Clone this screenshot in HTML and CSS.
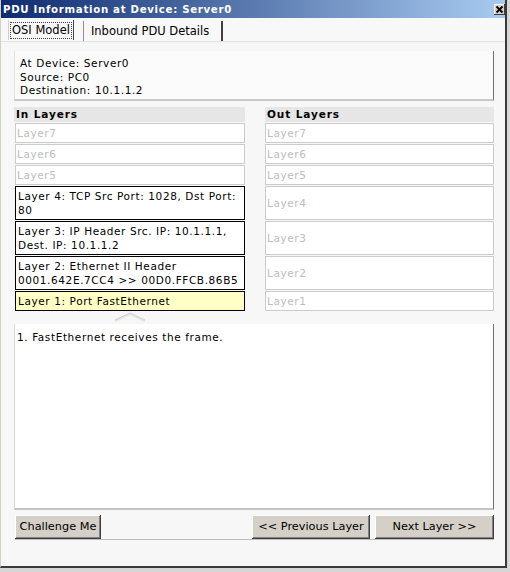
FILE: index.html
```html
<!DOCTYPE html>
<html>
<head>
<meta charset="utf-8">
<link rel="stylesheet" href="styles.css">
</head>
<body>
<div class="window">
  <div class="titlebar">
    <span class="title">PDU Information at Device: Server0</span>
    <span class="close"><svg width="9" height="9" viewBox="0 0 9 9"><path d="M1.5 1.5 L7.5 7.5 M7.5 1.5 L1.5 7.5" stroke="#000" stroke-width="1.8" fill="none"/></svg></span>
  </div>
  <div class="tabs">
    <div class="tab tab-sel"><span class="focus">OSI Model</span></div>
    <div class="tab tab-off">Inbound PDU Details</div>
  </div>
  <div class="page">
    <div class="info">At Device: Server0<br>Source: PC0<br>Destination: 10.1.1.2</div>
    <div class="cols">
      <div class="col col-in">
        <div class="colhead">In Layers</div>
        <div class="row">Layer7</div>
        <div class="row">Layer6</div>
        <div class="row">Layer5</div>
        <div class="row dbl act">Layer 4: TCP Src Port: 1028, Dst Port:<br>80</div>
        <div class="row dbl act">Layer 3: IP Header Src. IP: 10.1.1.1,<br>Dest. IP: 10.1.1.2</div>
        <div class="row dbl act">Layer 2: Ethernet II Header<br>0001.642E.7CC4 &gt;&gt; 00D0.FFCB.86B5</div>
        <div class="row act cur">Layer 1: Port FastEthernet</div>
      </div>
      <div class="col col-out">
        <div class="colhead">Out Layers</div>
        <div class="row">Layer7</div>
        <div class="row">Layer6</div>
        <div class="row">Layer5</div>
        <div class="row dbl">Layer4</div>
        <div class="row dbl">Layer3</div>
        <div class="row dbl">Layer2</div>
        <div class="row">Layer1</div>
      </div>
    </div>
    <div class="arrowrow">
      <svg width="34" height="11" viewBox="0 0 34 11"><polyline points="2,10 17,3 32,10" fill="none" stroke="#e6e6e6" stroke-width="2"/><polyline points="2,9 17,2 32,9" fill="none" stroke="#cfcfcf" stroke-width="1"/></svg>
    </div>
    <div class="desc">1. FastEthernet receives the frame.</div>
    <div class="btnbar">
      <button class="btn btn-chal">Challenge Me</button>
      <span class="spacer"></span>
      <button class="btn btn-prev">&lt;&lt; Previous Layer</button>
      <button class="btn btn-next">Next Layer &gt;&gt;</button>
    </div>
  </div>
</div>
</body>
</html>
```
FILE: styles.css
```css
html, body {
  margin: 0;
  padding: 0;
}
body {
  width: 510px;
  height: 572px;
  overflow: hidden;
  background: #d6d6d6;
  font-family: "DejaVu Sans", Verdana, sans-serif;
  font-size: 10.5px;
  letter-spacing: 0.6px;
  color: #000;
}
.window {
  width: 507px;
  height: 568px;
  box-sizing: border-box;
  background: #f7f7f7;
  border-left: 1px solid #d4d0c8;
  border-right: 2px solid #3a3a3a;
  border-bottom: 2px solid #3a3a3a;
  display: flex;
  flex-direction: column;
}
.titlebar {
  height: 18px;
  flex: none;
  display: flex;
  align-items: center;
  justify-content: space-between;
  background: linear-gradient(to right, #0e2b6f, #a8cbf1);
  color: #fff;
  font-weight: bold;
  font-size: 10.2px;
  letter-spacing: 0.7px;
  padding-left: 2px;
}
.close {
  width: 11px;
  height: 11px;
  background: #d4d0c8;
  box-shadow: inset -1px -1px #404040, inset 1px 1px #ffffff;
  display: flex;
  align-items: center;
  justify-content: center;
}
.tabs {
  height: 24px;
  flex: none;
  box-sizing: border-box;
  display: flex;
  align-items: flex-start;
  padding: 2px 0 0 7px;
  background: #f8f8f8;
  border-bottom: 1px solid #e2e2e2;
  font-size: 11.5px;
  letter-spacing: 0;
}
.tab {
  box-sizing: border-box;
  display: flex;
  align-items: center;
}
.tab-sel {
  height: 20px;
  padding: 1px;
  border-left: 1px solid #d0d0d0;
  border-right: 1px solid #404040;
}
.focus {
  height: 17px;
  box-sizing: border-box;
  border: 1px dotted #404040;
  display: flex;
  align-items: center;
  padding: 0 1px;
}
.tab-off {
  height: 20px;
  margin-top: 1px;
  margin-left: 9px;
  padding: 0 12px 0 7px;
  border-left: 1px solid #909090;
  border-right: 2px solid #404040;
}
.page {
  flex: 1;
  display: flex;
  flex-direction: column;
  padding: 9px 11px 0 13px;
}
.info {
  background: #fbfbfb;
  border-left: 1px solid #e0e0e0;
  border-right: 1px solid #707070;
  border-bottom: 2px solid #c8c8c8;
  padding: 6px 6px 1px 5px;
  line-height: 13.5px;
}
.cols {
  display: flex;
  gap: 20px;
  margin-top: 6px;
}
.col-in {
  width: 231px;
}
.col-out {
  width: 229px;
}
.colhead {
  height: 15px;
  line-height: 15px;
  background: #e6e6e6;
  font-weight: bold;
  letter-spacing: 0.9px;
  padding-left: 2px;
}
.row {
  margin-top: 1px;
  height: 20px;
  box-sizing: border-box;
  border: 1px solid #cbcbcb;
  background: #fff;
  color: #bdbdbd;
  padding: 0 1px;
  display: flex;
  align-items: center;
  line-height: 14px;
}
.col-in .row {
  margin-left: 1px;
}
.row.dbl {
  height: 34px;
}
.row.act {
  border-color: #000;
  color: #000;
  padding: 0 2px;
}
.row.cur {
  background: #ffffc6;
}
.arrowrow {
  width: 232px;
  height: 13px;
  display: flex;
  justify-content: center;
  align-items: flex-start;
}
.desc {
  height: 186px;
  box-sizing: border-box;
  background: #ffffff;
  border-left: 1px solid #d8d8d8;
  border-right: 1px solid #707070;
  border-bottom: 2px solid #c4c4c4;
  padding: 6px 2px;
  line-height: 14px;
}
.btnbar {
  margin-top: 5px;
  margin-left: 1px;
  height: 25px;
  box-sizing: border-box;
  display: flex;
  border-bottom: 1px solid #bcbcbc;
}
.spacer {
  flex: 1;
}
.btn {
  height: 24px;
  padding: 0;
  border: 0;
  background: #d4d0c8;
  box-shadow: inset -1px -1px #404040, inset 1px 1px #ffffff, inset -2px -2px #808080;
  font-family: "DejaVu Sans", Verdana, sans-serif;
  font-size: 11.3px;
  letter-spacing: 0;
  color: #000;
}
.btn-chal {
  width: 86px;
}
.btn-prev {
  width: 118px;
}
.btn-next {
  width: 119px;
  margin-left: 5px;
}
```
